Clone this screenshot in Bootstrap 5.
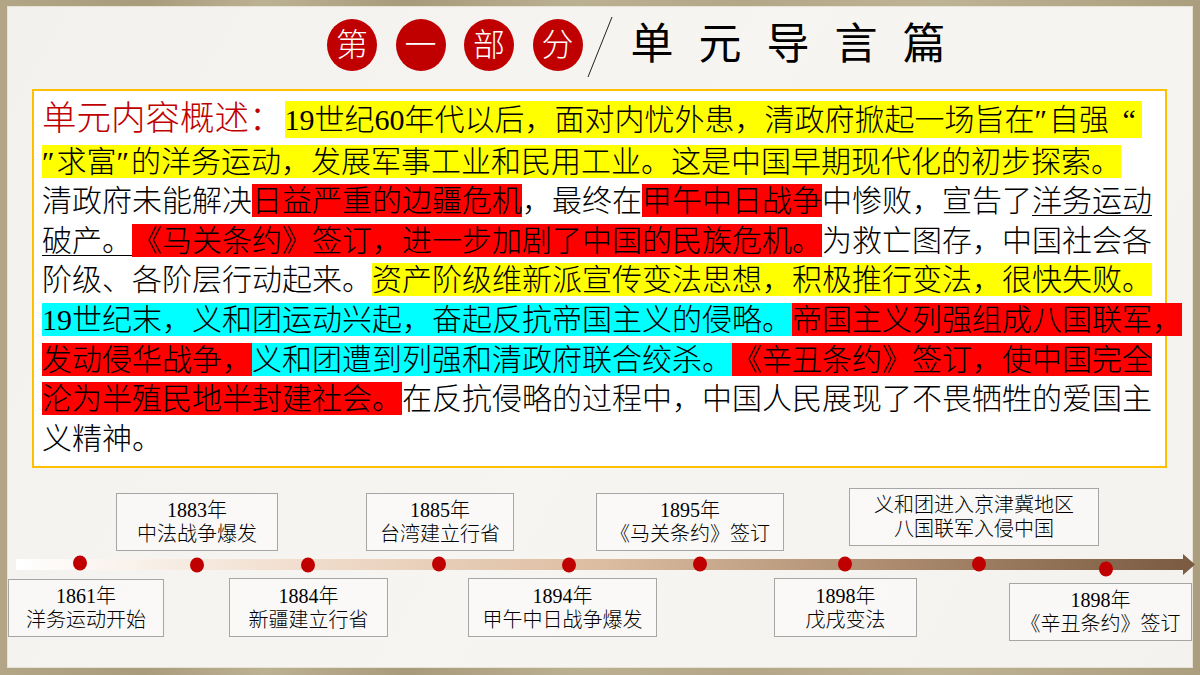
<!DOCTYPE html>
<html lang="zh-CN">
<head>
  <meta charset="UTF-8">
  <meta name="viewport" content="width=device-width, initial-scale=1.0">
  <title>单元导言篇</title>
  <link href="https://cdn.jsdelivr.net/npm/bootstrap@5.3.3/dist/css/bootstrap.min.css" rel="stylesheet">
  <script src="https://cdn.jsdelivr.net/npm/bootstrap@5.3.3/dist/js/bootstrap.bundle.min.js"></script>
  <style>
    html, body { margin: 0; width: 1200px; height: 675px; overflow: hidden; }
    body {
      font-family: "Liberation Serif", "Noto Sans CJK SC", serif;
      color: #000;
      background: linear-gradient(90deg, #b3a687, #a99c7c 12%, #bdb194 22%, #a89b7b 34%, #bcb093 48%, #b4a788 62%, #bfb396 78%, #ab9e7e);
    }
    .slide-frame { width: 1200px; height: 675px; padding: 7px 8px 8px 8px; }
    .slide-panel { position: relative; height: 100%; background: linear-gradient(120deg, #f3f1ed, #f7f5f2 50%, #f4f2ee); box-shadow: 0 0 0 1px #e6e2d6; }
    .title-row { height: 82px; padding-left: 319px; }
    .title-dot {
      width: 50px; height: 52px; background: #c00000; color: #fff;
      font-size: 32px; font-weight: 300; line-height: 1; flex: none; margin-top: 12px;
    }
    .title-dot + .title-dot { margin-left: 18.5px; }
    .title-slash { width: 26px; height: 62px; margin: 9px 0 0 4px; flex: none; }
    .title-main { font-size: 43px; letter-spacing: 25px; line-height: 1; margin: 16px 0 0 18px; white-space: nowrap; }
    .intro-box {
      margin-left: 24px; width: 1135px; height: 379px;
      border: 2px solid #ffc000; background: #fff; padding: 8px 0 0 8px;
      font-size: 30px; font-weight: 300; line-height: 39.6px;
    }
    .intro-line { white-space: nowrap; height: 39.6px; }
    .intro-first { height: 42.6px; }
    .intro-head { color: #c00000; font-size: 34.5px; }
    .mark-y, .mark-r, .mark-c { display: inline-block; line-height: 33px; }
    .mark-y { background: #ff0; }
    .mark-r { background: #f00; }
    .mark-c { background: #0ff; }
    .mark-first { line-height: 37px; padding-right: 6px; margin-left: 1px; }
    .quote-wide { letter-spacing: 2px; }
    .quote-open { margin-left: 6px; }
    .u-line { text-decoration: underline; text-underline-offset: 4px; text-decoration-thickness: 1px; }
    .time-bar {
      position: absolute; left: 8px; top: 547px; width: 1179px; height: 21px;
      background: linear-gradient(90deg, #fff, #f0dccb 25%, #dcbca0 50%, #b08f73 72%, #7a5a40);
      clip-path: polygon(0 5px, 1167px 5px, 1167px 0, 100% 50%, 1167px 100%, 1167px 16px, 0 16px);
    }
    .time-dot { position: absolute; width: 14px; height: 15px; background: #c00000; transform: translate(-50%, -50%); }
    .time-box {
      position: absolute; border: 1px solid #a6a6a6; background: rgba(255,255,255,.45);
      font-size: 20px; font-weight: 300; line-height: 24px; white-space: nowrap;
    }
  </style>
</head>
<body>
  <div class="slide-frame">
    <div class="slide-panel">
      <div class="title-row d-flex align-items-start">
        <div class="title-dot rounded-circle d-flex align-items-center justify-content-center">第</div>
        <div class="title-dot rounded-circle d-flex align-items-center justify-content-center">一</div>
        <div class="title-dot rounded-circle d-flex align-items-center justify-content-center">部</div>
        <div class="title-dot rounded-circle d-flex align-items-center justify-content-center">分</div>
        <svg class="title-slash" viewBox="0 0 26 62"><line x1="25" y1="1" x2="1" y2="61" stroke="#222" stroke-width="1"/></svg>
        <div class="title-main">单元导言篇</div>
      </div>
      <div class="intro-box">
        <div class="intro-line intro-first"><span class="intro-head">单元内容概述：</span><span class="mark-y mark-first">19世纪60年代以后，面对内忧外患，清政府掀起一场旨在<span class="quote-wide">″</span>自强 <span class="quote-open">“</span></span></div>
        <div class="intro-line"><span class="mark-y"><span class="quote-wide">″</span>求富<span class="quote-wide">″</span>的洋务运动，发展军事工业和民用工业。这是中国早期现代化的初步探索。</span></div>
        <div class="intro-line">清政府未能解决<span class="mark-r">日益严重的边疆危机</span>，最终在<span class="mark-r">甲午中日战争</span>中惨败，宣告了<span class="u-line">洋务运动</span></div>
        <div class="intro-line"><span class="u-line">破产。</span><span class="mark-r">《马关条约》签订，进一步加剧了中国的民族危机。</span>为救亡图存，中国社会各</div>
        <div class="intro-line">阶级、各阶层行动起来。<span class="mark-y">资产阶级维新派宣传变法思想，积极推行变法，很快失败。</span></div>
        <div class="intro-line"><span class="mark-c">19世纪末，义和团运动兴起，奋起反抗帝国主义的侵略。</span><span class="mark-r">帝国主义列强组成八国联军，</span></div>
        <div class="intro-line"><span class="mark-r">发动侵华战争，</span><span class="mark-c">义和团遭到列强和清政府联合绞杀。</span><span class="mark-r">《辛丑条约》签订，使中国完全</span></div>
        <div class="intro-line"><span class="mark-r">沦为半殖民地半封建社会。</span>在反抗侵略的过程中，中国人民展现了不畏牺牲的爱国主</div>
        <div class="intro-line">义精神。</div>
      </div>

      <div class="time-bar"></div>
      <div class="time-dot rounded-circle" style="left:72px;top:556px"></div>
      <div class="time-dot rounded-circle" style="left:189px;top:558px"></div>
      <div class="time-dot rounded-circle" style="left:300px;top:558px"></div>
      <div class="time-dot rounded-circle" style="left:431px;top:557px"></div>
      <div class="time-dot rounded-circle" style="left:561px;top:558px"></div>
      <div class="time-dot rounded-circle" style="left:692px;top:557px"></div>
      <div class="time-dot rounded-circle" style="left:837px;top:557px"></div>
      <div class="time-dot rounded-circle" style="left:971px;top:557px"></div>
      <div class="time-dot rounded-circle" style="left:1098px;top:562px"></div>

      <div class="time-box d-flex flex-column align-items-center justify-content-center" style="left:0;top:572px;width:156px;height:58px"><span>1861年</span><span>洋务运动开始</span></div>
      <div class="time-box d-flex flex-column align-items-center justify-content-center" style="left:108px;top:486px;width:162px;height:58px"><span>1883年</span><span>中法战争爆发</span></div>
      <div class="time-box d-flex flex-column align-items-center justify-content-center" style="left:221px;top:571px;width:159px;height:59px"><span>1884年</span><span>新疆建立行省</span></div>
      <div class="time-box d-flex flex-column align-items-center justify-content-center" style="left:358px;top:486px;width:148px;height:58px"><span>1885年</span><span>台湾建立行省</span></div>
      <div class="time-box d-flex flex-column align-items-center justify-content-center" style="left:460px;top:571px;width:189px;height:59px"><span>1894年</span><span>甲午中日战争爆发</span></div>
      <div class="time-box d-flex flex-column align-items-center justify-content-center" style="left:588px;top:486px;width:188px;height:58px"><span>1895年</span><span>《马关条约》签订</span></div>
      <div class="time-box d-flex flex-column align-items-center justify-content-center" style="left:766px;top:571px;width:143px;height:59px"><span>1898年</span><span>戊戌变法</span></div>
      <div class="time-box d-flex flex-column align-items-center justify-content-center" style="left:841px;top:481px;width:250px;height:58px"><span>义和团进入京津冀地区</span><span>八国联军入侵中国</span></div>
      <div class="time-box d-flex flex-column align-items-center justify-content-center" style="left:1001px;top:576px;width:183px;height:58px"><span>1898年</span><span>《辛丑条约》签订</span></div>
    </div>
  </div>
</body>
</html>
